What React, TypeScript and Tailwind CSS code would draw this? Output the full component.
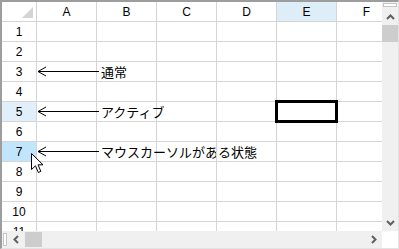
const cols = ['A', 'B', 'C', 'D', 'E', 'F']
const rows = [1, 2, 3, 4, 5, 6, 7, 8, 9, 10, 11]

const notes: Record<number, string> = {
  3: '通常',
  5: 'アクティブ',
  7: 'マウスカーソルがある状態',
}

const rowHeaderBg: Record<number, string> = {
  5: 'bg-[#e0eff9]',
  7: 'bg-[#c1e5fa]',
}

function LeftArrow() {
  return (
    <svg width="62" height="11" viewBox="0 0 62 11" className="shrink-0 overflow-visible">
      <path d="M1 5.5 H62 M1 5.5 L9 1 M1 5.5 L9 10" stroke="#000" strokeWidth="1" fill="none" />
    </svg>
  )
}

function Chevron({ dir }: { dir: 'up' | 'down' | 'left' | 'right' }) {
  const d = {
    up: 'M1 6 L4.5 2.5 L8 6',
    down: 'M1 2 L4.5 5.5 L8 2',
    left: 'M6 1 L2.5 4.5 L6 8',
    right: 'M2 1 L5.5 4.5 L2 8',
  }[dir]
  const horiz = dir === 'up' || dir === 'down'
  return (
    <svg width={horiz ? 9 : 8} height={horiz ? 8 : 9} viewBox={horiz ? '0 0 9 8' : '0 0 8 9'}>
      <path d={d} stroke="#606060" strokeWidth="2" fill="none" />
    </svg>
  )
}

function Cursor() {
  return (
    <svg width="14" height="21" viewBox="0 0 14 21">
      <path
        d="M0.5 0.5 V16.5 L4.5 12.8 L7.3 19.5 L9.8 18.4 L7.1 11.8 H12 Z"
        fill="#fff"
        stroke="#000"
        strokeWidth="1"
        strokeLinejoin="miter"
      />
    </svg>
  )
}

export default function App() {
  return (
    <div
      className="w-[399px] h-[249px] bg-white border-t-2 border-l-2 border-[#9d9d9d] border-r border-b border-r-[#e3e3e3] border-b-[#e3e3e3] flex flex-col overflow-hidden text-black"
      style={{ fontFamily: '"Liberation Sans", Arial, sans-serif' }}
    >
      <div className="flex h-[229px]">
        <div className="relative w-[380px] h-[229px] overflow-hidden">
          <div className="grid grid-cols-[35px_60px_60px_60px_60px_60px_60px] auto-rows-[20px] w-[395px]">
            <div className="relative border-r border-b border-[#d5d5d5]">
              <svg width="34" height="19" viewBox="0 0 34 19" className="absolute left-0 top-0">
                <polygon points="31,5 31,16 20,16" fill="#d4d4d4" />
              </svg>
            </div>
            {cols.map((c) => (
              <div
                key={c}
                className={`flex items-center justify-center border-r border-b border-[#d5d5d5] text-[12px] ${c === 'E' ? 'bg-[#ddeef8]' : ''}`}
              >
                {c}
              </div>
            ))}
            {rows.map((r) => (
              <Row key={r} r={r} />
            ))}
          </div>

          <div className="absolute left-[273px] top-[98px] w-[63px] h-[23px] border-[3px] border-black" />
          <div className="absolute left-[29px] top-[151px]">
            <Cursor />
          </div>
        </div>

        <div className="w-[16px] bg-[#f0f0f0] flex flex-col">
          <div className="mt-[1px] mx-[1px] h-[4px] border border-[#c6c6c6] bg-white" />
          <div className="h-[17px] flex items-center justify-center pt-[2px]">
            <Chevron dir="up" />
          </div>
          <div className="h-[17px] bg-[#cdcdcd] mt-[1px]" />
          <div className="flex-1" />
          <div className="h-[17px] flex items-center justify-center">
            <Chevron dir="down" />
          </div>
        </div>
      </div>

      <div className="flex h-[17px]">
        <div className="w-[380px] bg-[#f0f0f0] flex">
          <div className="ml-[1px] my-[2px] w-[4px] border border-[#c6c6c6] bg-white" />
          <div className="w-[17px] flex items-center justify-center">
            <Chevron dir="left" />
          </div>
          <div className="ml-[1px] w-[17px] my-[1px] bg-[#cdcdcd]" />
          <div className="flex-1" />
          <div className="w-[17px] flex items-center justify-center">
            <Chevron dir="right" />
          </div>
        </div>
        <div className="w-[16px] bg-white" />
      </div>
    </div>
  )
}

function Row({ r }: { r: number }) {
  const note = notes[r]
  return (
    <>
      <div
        className={`flex items-center justify-center border-r border-b border-[#d5d5d5] text-[12px] ${rowHeaderBg[r] ?? ''}`}
      >
        {r}
      </div>
      {cols.map((c) => (
        <div key={c} className="flex items-center border-r border-b border-[#d5d5d5] min-w-0">
          {note && c === 'A' && <LeftArrow />}
          {note && c === 'B' && (
            <span
              className="pl-[4px] whitespace-nowrap text-[13px] leading-none"
              style={{ fontFamily: '"Noto Sans CJK JP", "Liberation Sans", sans-serif' }}
            >
              {note}
            </span>
          )}
        </div>
      ))}
    </>
  )
}
